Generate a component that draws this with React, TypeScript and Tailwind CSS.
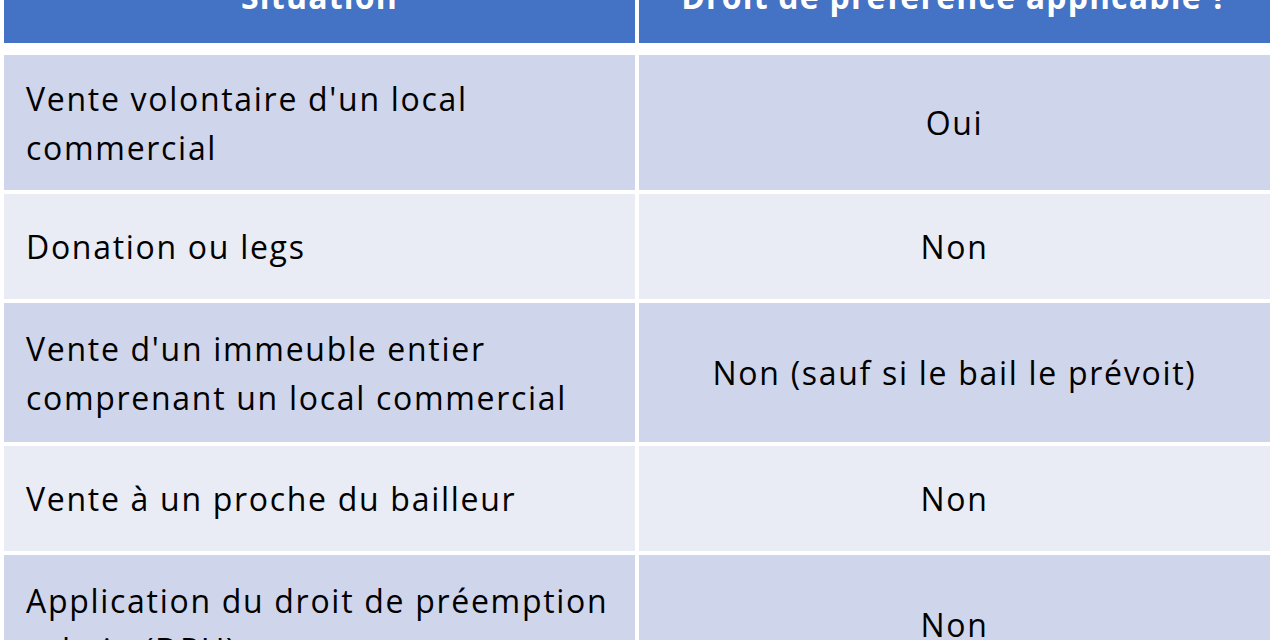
const rows = [
  { situation: ["Vente volontaire d'un local", "commercial"], droit: "Oui", h: "h-[135px]", bg: "bg-[#cfd5ea]" },
  { situation: ["Donation ou legs"], droit: "Non", h: "h-[105px]", bg: "bg-[#e9ebf5]" },
  { situation: ["Vente d'un immeuble entier", "comprenant un local commercial"], droit: "Non (sauf si le bail le prévoit)", h: "h-[139px]", bg: "bg-[#cfd5ea]" },
  { situation: ["Vente à un proche du bailleur"], droit: "Non", h: "h-[105px]", bg: "bg-[#e9ebf5]" },
  { situation: ["Application du droit de préemption", "urbain (DPU)"], droit: "Non", h: "h-[139px]", bg: "bg-[#cfd5ea]" },
];

export default function App() {
  return (
    <div
      className="w-[1280px] h-[640px] overflow-hidden bg-white pl-[4px] text-[32px] leading-[49px] tracking-[1.7px] text-black"
      style={{ fontFamily: "'Open Sans', 'Noto Sans', sans-serif" }}
    >
      <div className="w-[1266px] flex flex-col gap-[4px]">
        {/* header, top cut off */}
        <div className="grid grid-cols-2 gap-[4px] mb-[8px]">
          <div className="h-[43px] bg-[#4472c4] text-white font-bold tracking-[1.2px] text-center">
            <div className="-mt-[28px]">Situation</div>
          </div>
          <div className="h-[43px] bg-[#4472c4] text-white font-bold tracking-[1.2px] text-center">
            <div className="-mt-[28px]">Droit de préférence applicable ?</div>
          </div>
        </div>

        {rows.map((r, i) => (
          <div key={i} className="grid grid-cols-2 gap-[4px]">
            <div className={`${r.h} ${r.bg} flex flex-col justify-center pl-[22px]`}>
              {r.situation.map((line, j) => (
                <div key={j}>{line}</div>
              ))}
            </div>
            <div className={`${r.h} ${r.bg} flex items-center justify-center`}>
              {r.droit}
            </div>
          </div>
        ))}
      </div>
    </div>
  );
}
